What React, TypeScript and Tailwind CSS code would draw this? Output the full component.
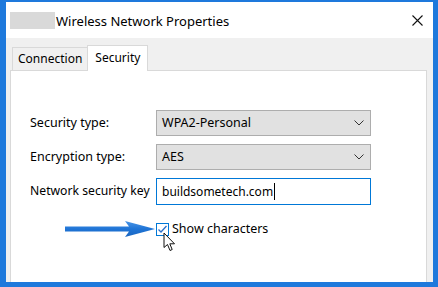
import React from 'react';

const font = { fontFamily: '"Segoe UI", "Noto Sans", "Liberation Sans", sans-serif' };

const Chevron = () => (
    <svg width="10" height="6" viewBox="0 0 10 6" className="shrink-0">
        <path d="M0.5 0.5 L5 5 L9.5 0.5" fill="none" stroke="#333" strokeWidth="1" />
    </svg>
);

const SelectBox: React.FC<{ value: string; h: string }> = ({ value, h }) => (
    <div className={`flex items-center justify-between w-[215px] ${h} bg-[#e1e1e1] border border-[#adadad] pl-[5px] pr-[6px] text-black`}>
        <span>{value}</span>
        <Chevron />
    </div>
);

export default function App() {
    return (
        <div className="w-[438px] h-[287px] bg-[#1e79dc] pt-[2px] pl-[6px] pr-[5px] pb-[5px] overflow-hidden" style={font}>
            <div className="relative flex flex-col h-full bg-[#f0f0f0]">
                {/* Title bar */}
                <div className="flex items-center h-[36px] bg-white shrink-0">
                    <div className="ml-[4px] w-[45px] h-[17px] bg-[#d9d9d9]" />
                    <span className="ml-[1px] mt-[2px] text-[13px] text-black leading-none whitespace-nowrap">Wireless Network Properties</span>
                    <svg width="11" height="11" viewBox="0 0 11 11" className="ml-auto mr-[10px]">
                        <path d="M0.5 0.5 L10.5 10.5 M10.5 0.5 L0.5 10.5" stroke="#111" strokeWidth="1.1" />
                    </svg>
                </div>

                {/* Body */}
                <div className="flex flex-col flex-1 pt-[7px] pl-[4px] pr-[6px] text-[12.5px]">
                    {/* Tabs */}
                    <div className="flex items-end pl-[2px] h-[25px] relative z-10 text-[12px]">
                        <div className="flex items-center h-[23px] px-[5px] border border-b-0 border-r-0 border-[#d9d9d9] bg-[#f0f0f0] text-black">
                            Connection
                        </div>
                        <div className="flex items-center h-[26px] -mb-[1px] px-[7px] pb-[2px] border border-b-0 border-[#d9d9d9] bg-white text-black">
                            Security
                        </div>
                    </div>

                    {/* Panel */}
                    <div className="flex-1 bg-white border border-b-0 border-[#d9d9d9] pt-[39px] pl-[19px]">
                        <div className="grid grid-cols-[126px_215px] gap-y-[8px] items-center text-black whitespace-nowrap">
                            <span>Security type:</span>
                            <SelectBox value="WPA2-Personal" h="h-[26px]" />
                            <span>Encryption type:</span>
                            <SelectBox value="AES" h="h-[26px]" />
                            <span className="text-[12.2px]">Network security key</span>
                            <div className="flex items-center w-[215px] h-[27px] border border-[#0078d7] pl-[5px] text-[12px]">
                                <span>buildsometech.com</span>
                                <span className="w-px h-[17px] bg-black ml-[1px]" />
                            </div>
                        </div>

                        <div className="flex items-center mt-[15px] ml-[126px] text-black">
                            <div className="flex items-center justify-center w-[13px] h-[13px] border border-[#0078d7] bg-white">
                                <svg width="11" height="11" viewBox="0 0 11 11">
                                    <path d="M1.5 5.5 L4 8 L9.5 2" fill="none" stroke="#2a6fc9" strokeWidth="1.3" />
                                </svg>
                            </div>
                            <span className="ml-[3px]">Show characters</span>
                        </div>
                    </div>
                </div>

                {/* Annotation arrow */}
                <svg className="absolute left-[57px] top-[217px]" width="92" height="20" viewBox="0 0 92 20">
                    <defs>
                        <linearGradient id="ag" x1="0" y1="0" x2="0" y2="1">
                            <stop offset="0" stopColor="#4a95e6" />
                            <stop offset="0.5" stopColor="#1f74d6" />
                            <stop offset="1" stopColor="#1a66c0" />
                        </linearGradient>
                    </defs>
                    <path d="M2 7.5 L66 7.5 L62 2 L92 10 L62 18 L66 12.5 L2 12.5 Z" fill="url(#ag)" />
                </svg>

                {/* Mouse cursor */}
                <svg className="absolute left-[157px] top-[230px]" width="14" height="20" viewBox="0 0 14 20">
                    <path d="M1 1 L1 15.5 L4.5 12.5 L7 18.5 L9.2 17.5 L6.8 11.8 L11.5 11.8 Z" fill="#fff" stroke="#111" strokeWidth="1" strokeLinejoin="miter" />
                </svg>
            </div>
        </div>
    );
}
